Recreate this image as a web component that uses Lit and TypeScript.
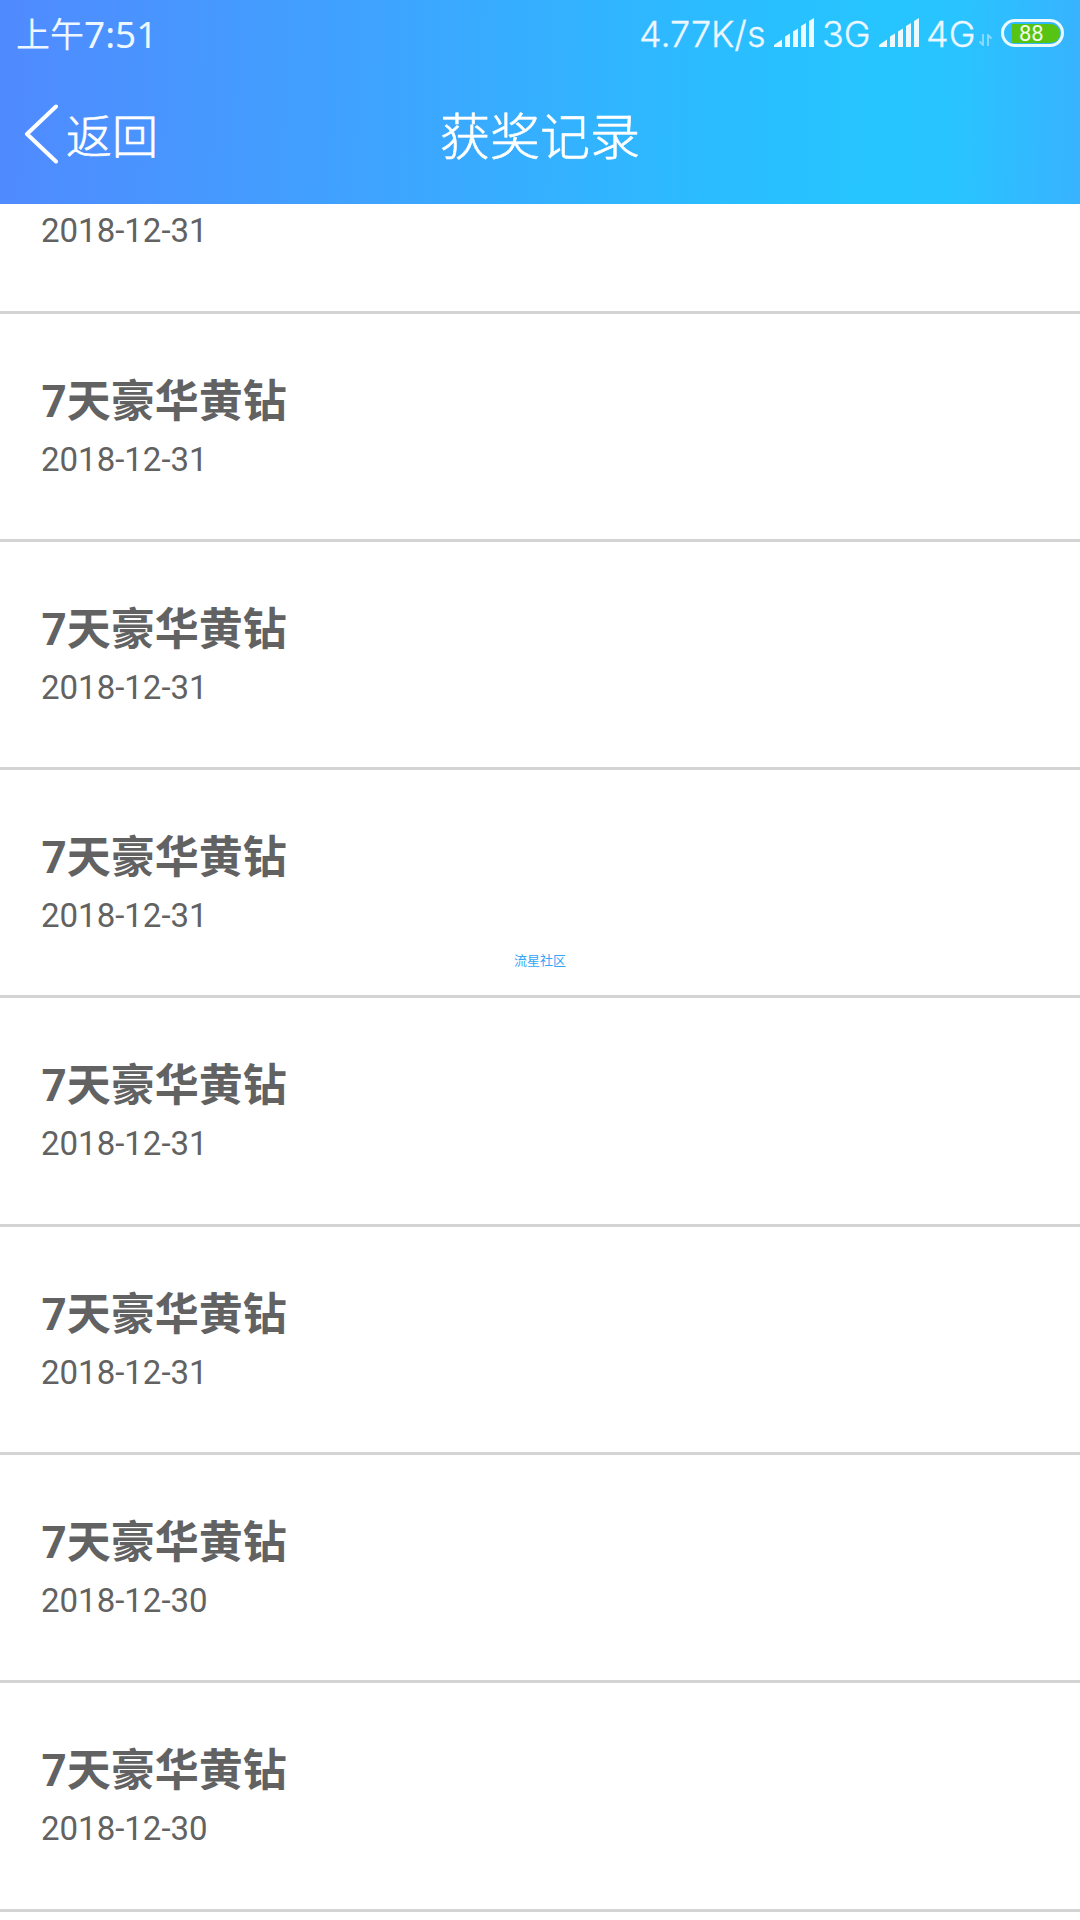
import { LitElement, html, css, svg, nothing } from "lit";
import { customElement, property } from "lit/decorators.js";

interface Award {
  name: string;
  date: string;
}

// The first row is scrolled under the header, so only its date is drawn.
const awards: Award[] = [
  { name: "", date: "2018-12-31" },
  ...Array.from({ length: 5 }, () => ({ name: "7天豪华黄钻", date: "2018-12-31" })),
  ...Array.from({ length: 2 }, () => ({ name: "7天豪华黄钻", date: "2018-12-30" })),
];

@customElement("signal-bars")
class SignalBars extends LitElement {
  static styles = css`
    :host { display: block; width: 40px; height: 29px; }
    .bars { display: block; fill: #ecf9ff; }
  `;
  render() {
    return html`<svg class="bars" width="40" height="29" viewBox="0 0 40 29">
      ${svg`<path d="M0 29V27L8 21.500V29Z"/>
      <path d="M11 29V18.500L16 15.500V29Z"/>
      <path d="M19 29V13.500L24 10.500V29Z"/>
      <path d="M27 29V8L32 5V29Z"/>
      <path d="M35 29V3L40 0V29Z"/>`}
    </svg>`;
  }
}

@customElement("status-bar")
class StatusBar extends LitElement {
  static styles = css`
    :host {
      display: flex;
      justify-content: space-between;
      height: 66px;
      padding: 0 16px 0 16px;
      box-sizing: border-box;
      color: #ecf7ff;
      font-family: "Noto Sans", "Noto Sans CJK SC", sans-serif;
      font-weight: 300;
      line-height: 66px;
      white-space: nowrap;
    }
    .time { display: flex; padding-top: 1px; line-height: 65px; }
    .ampm { width: 68px; height: 65px; font-family: "Noto Sans CJK SC", sans-serif; font-weight: 400; font-size: 34px; line-height: 64px; }
    .clock { font-family: "Noto Sans", sans-serif; font-weight: 400; font-size: 37px; line-height: 65px; height: 65px; }
    .right { display: flex; font-family: "Inter", sans-serif; font-size: 36px; line-height: 68px; height: 66px; -webkit-text-stroke: 0.3px #ecf7ff; }
    .speed { width: 135px; }
    .bars { margin-top: 18px; }
    .net3 { width: 57px; margin-left: 8px; }
    .net4 { width: 52px; margin-left: 7px; }
    .arrows { margin: 34px 9px 0 1px; }
    .battery {
      display: flex;
      width: 63px;
      height: 28px;
      margin-top: 19px;
      padding: 4px;
      box-sizing: border-box;
      border: 3px solid #ecf9ff;
      border-radius: 14px;
      -webkit-text-stroke: 0;
    }
    .level {
      display: flex;
      justify-content: flex-start;
      width: 48px;
      flex: none;
      height: 19px;
      margin: -2px 0 0 4px;
      padding-left: 7px;
      box-sizing: border-box;
      border-radius: 0 10px 10px 0;
      background: #57c413;
      color: #f2fbe9;
      font-family: "Roboto", sans-serif;
      font-size: 22px;
      font-weight: 400;
      line-height: 20px;
    }
  `;
  render() {
    return html`
      <div class="time"><span class="ampm">上午</span><span class="clock">7:51</span></div>
      <div class="right">
        <span class="speed">4.77K/s</span>
        <signal-bars class="bars"></signal-bars>
        <span class="net3">3G</span>
        <signal-bars class="bars"></signal-bars>
        <span class="net4">4G</span>
        <svg class="arrows" width="13" height="12" viewBox="0 0 13 12" fill="none" stroke="#8fdcff" stroke-width="1.800">
          <path d="M4 0V11L0.500 7.500M9 12V1L12.500 4.500" />
        </svg>
        <div class="battery"><div class="level">88</div></div>
      </div>
    `;
  }
}

@customElement("nav-bar")
class NavBar extends LitElement {
  static styles = css`
    :host {
      display: grid;
      grid-template-columns: 1fr auto 1fr;
      align-items: center;
      height: 138px;
      padding: 0 24px 4px;
      box-sizing: border-box;
      color: #fff;
      font-family: "Noto Sans CJK SC", sans-serif;
      font-weight: 300;
      -webkit-text-stroke: 0.6px #fff;
    }
    .back { display: flex; align-items: center; gap: 8px; font-size: 46px; line-height: 70px; }
    .chevron { margin-top: 1px; }
    .back-text { margin-top: -1px; }
    .title { font-size: 50px; line-height: 76px; }
  `;
  render() {
    return html`
      <div class="back">
        <svg class="chevron" width="34" height="60" viewBox="0 0 34 60" fill="none" stroke="#fff" stroke-width="4" stroke-linecap="round" stroke-linejoin="round">
          <path d="M32 2.500L3 30L32 57.500" />
        </svg>
        <span class="back-text">返回</span>
      </div>
      <div class="title">获奖记录</div>
    `;
  }
}

@customElement("award-row")
class AwardRow extends LitElement {
  @property() name = "";
  @property() date = "";
  static styles = css`
    :host {
      display: block;
      height: 228.290px;
      padding: 58px 41px 0;
      box-sizing: border-box;
      border-bottom: 3px solid #d4d4d4;
      color: #626262;
      font-family: "Roboto", "Noto Sans CJK SC", sans-serif;
    }
    .name { height: 60px; padding-left: 0.500px; font-size: 44px; font-weight: 700; line-height: 60px; }
    .date { height: 50px; font-size: 33px; line-height: 50px; margin-top: 3px; }
  `;
  render() {
    return html`<div class="name">${this.name || nothing}</div><div class="date">${this.date}</div>`;
  }
}

@customElement("app-root")
class AppRoot extends LitElement {
  static styles = css`
    :host {
      display: flex;
      flex-direction: column;
      position: relative;
      width: 1080px;
      height: 1920px;
      overflow: hidden;
      background: #fff;
    }
    .header {
      flex: none;
      height: 204px;
      background: linear-gradient(91deg, #508aff 0%, #3fa3ff 34%, #2abdff 67%, #26c5ff 81%, #28c4ff 88%, #38b3ff 100%);
    }
    .viewport { flex: 1; display: flex; flex-direction: column; justify-content: flex-end; overflow: hidden; }
    .list { flex: none; padding-bottom: 8.400px; }
    .watermark {
      position: absolute;
      left: 514px;
      top: 950px;
      color: #35a5f5;
      font-family: "Noto Sans CJK SC", sans-serif;
      font-size: 13px;
      line-height: 20px;
    }
  `;
  render() {
    return html`
      <div class="header">
        <status-bar></status-bar>
        <nav-bar></nav-bar>
      </div>
      <div class="viewport">
        <div class="list">
          ${awards.map((a) => html`<award-row .name=${a.name} .date=${a.date}></award-row>`)}
        </div>
      </div>
      <div class="watermark">流星社区</div>
    `;
  }
}
